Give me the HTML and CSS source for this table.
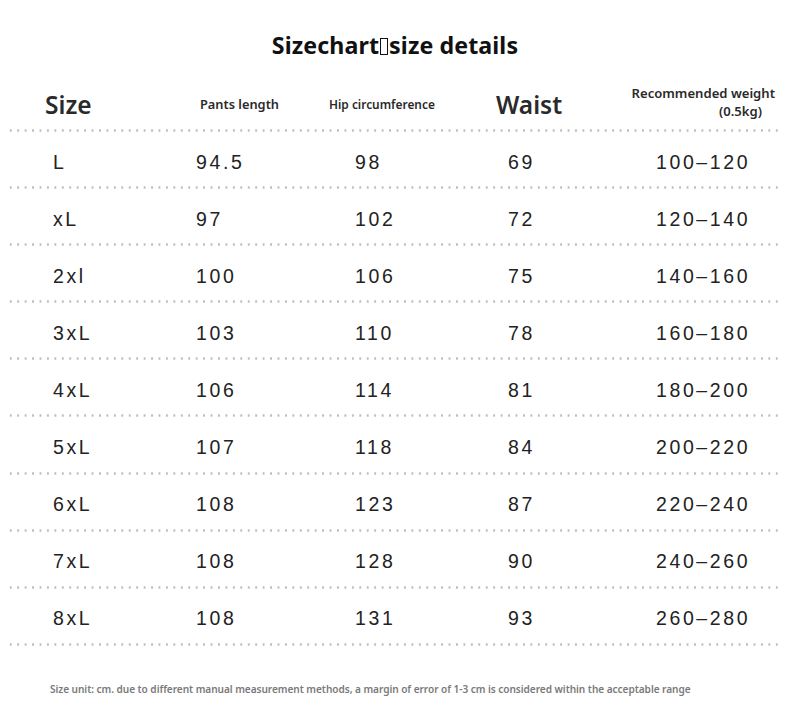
FILE: index.html
```html
<!DOCTYPE html>
<html>
<head>
<meta charset="utf-8">
<link rel="stylesheet" href="styles.css">
</head>
<body>
<div class="page">
  <h1 class="title">Sizechart<span class="tofu"></span>size details</h1>
  <div class="table">
    <div class="row head">
      <div class="h-size">Size</div>
      <div class="h-sm h-pants">Pants length</div>
      <div class="h-xs">Hip circumference</div>
      <div class="h-waist">Waist</div>
      <div class="h-weight"><span>Recommended weight</span><span class="kg">(0.5kg)</span></div>
    </div>
    <div class="row data"><div>L</div><div>94.5</div><div>98</div><div>69</div><div>100–120</div></div>
    <div class="row data"><div>xL</div><div>97</div><div>102</div><div>72</div><div>120–140</div></div>
    <div class="row data"><div>2xl</div><div>100</div><div>106</div><div>75</div><div>140–160</div></div>
    <div class="row data"><div>3xL</div><div>103</div><div>110</div><div>78</div><div>160–180</div></div>
    <div class="row data"><div>4xL</div><div>106</div><div>114</div><div>81</div><div>180–200</div></div>
    <div class="row data"><div>5xL</div><div>107</div><div>118</div><div>84</div><div>200–220</div></div>
    <div class="row data"><div>6xL</div><div>108</div><div>123</div><div>87</div><div>220–240</div></div>
    <div class="row data"><div>7xL</div><div>108</div><div>128</div><div>90</div><div>240–260</div></div>
    <div class="row data"><div>8xL</div><div>108</div><div>131</div><div>93</div><div>260–280</div></div>
  </div>
  <p class="note">Size unit: cm. due to different manual measurement methods, a margin of error of 1-3 cm is considered within the acceptable range</p>
</div>
</body>
</html>
```

FILE: styles.css
```css
html, body {
  margin: 0;
  padding: 0;
  background: #ffffff;
}

.page {
  width: 790px;
  height: 720px;
  font-family: "Noto Sans", "Open Sans", sans-serif;
  color: #222;
}

.title {
  margin: 0;
  height: 70px;
  padding-top: 10px;
  display: flex;
  align-items: center;
  justify-content: center;
  font-size: 23.2px;
  font-weight: 700;
  color: #111;
  letter-spacing: 0.1px;
}

.tofu {
  display: inline-block;
  width: 8px;
  height: 17px;
  border: 1.5px solid #111;
  box-sizing: border-box;
  margin: 0 1px;
  position: relative;
  top: 1px;
}

.table {
  margin: 0 9px 0 7px;
}

.row {
  display: grid;
  align-items: center;
  background-image: radial-gradient(circle, #bdbdbd 1px, rgba(255,255,255,0) 1.4px);
  background-size: 7.45px 3px;
  background-repeat: repeat-x;
  background-position: 0 100%;
}

.head {
  height: 52px;
  padding-left: 38px;
  grid-template-columns: 155px 129px 167px 134px 1fr;
  color: #2a2a2a;
}

.h-size, .h-waist {
  font-size: 24.5px;
  font-weight: 600;
  padding-bottom: 4px;
}

.h-sm {
  font-size: 12.8px;
  font-weight: 600;
  padding-bottom: 4px;
}

.h-xs {
  font-size: 11.9px;
  font-weight: 600;
  padding-bottom: 4px;
}

.h-weight {
  display: flex;
  flex-direction: column;
  align-items: flex-end;
  gap: 4px;
  width: 145px;
  font-size: 13.1px;
  font-weight: 600;
  line-height: 14px;
  padding-bottom: 8px;
  white-space: nowrap;
}

.h-weight .kg {
  margin-right: 13px;
}

.data {
  height: 57.1px;
  padding-left: 46px;
  padding-top: 3px;
  box-sizing: border-box;
  grid-template-columns: 143px 159px 153px 148px 1fr;
  font-family: "Liberation Sans", Arial, sans-serif;
  font-size: 19.5px;
  letter-spacing: 2.6px;
  color: #222;
}

.note {
  margin: 36px 0 0 50px;
  font-size: 10.1px;
  font-weight: 600;
  color: #7a7a7a;
  letter-spacing: -0.05px;
  white-space: nowrap;
}
```
